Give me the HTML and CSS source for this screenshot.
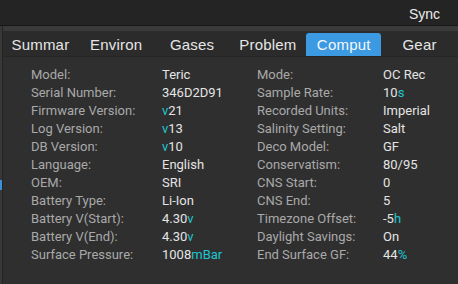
FILE: index.html
```html
<!DOCTYPE html>
<html lang="en">
<head>
  <meta charset="UTF-8" />
  <title>Dive Log - Computer</title>
  <link rel="stylesheet" href="styles.css">
</head>
<body>
  <div class="topbar">
    <span class="sync">Sync</span>
  </div>
  <div class="main">
    <div class="rail"><span class="rail-mark"></span></div>
    <div class="panel">
      <div class="tabs" role="tablist">
        <div class="tab">Summar</div>
        <div class="tab">Environ</div>
        <div class="tab">Gases</div>
        <div class="tab">Problem</div>
        <div class="tab active">Comput</div>
        <div class="tab">Gear</div>
      </div>

      <div class="info">
        <span class="label">Model:</span><span class="value">Teric</span>
        <span class="label">Mode:</span><span class="value">OC Rec</span>

        <span class="label">Serial Number:</span><span class="value">346D2D91</span>
        <span class="label">Sample Rate:</span><span class="value">10<i class="unit">s</i></span>

        <span class="label">Firmware Version:</span><span class="value"><i class="unit">v</i>21</span>
        <span class="label">Recorded Units:</span><span class="value">Imperial</span>

        <span class="label">Log Version:</span><span class="value"><i class="unit">v</i>13</span>
        <span class="label">Salinity Setting:</span><span class="value">Salt</span>

        <span class="label">DB Version:</span><span class="value"><i class="unit">v</i>10</span>
        <span class="label">Deco Model:</span><span class="value">GF</span>

        <span class="label">Language:</span><span class="value">English</span>
        <span class="label">Conservatism:</span><span class="value">80/95</span>

        <span class="label">OEM:</span><span class="value">SRI</span>
        <span class="label">CNS Start:</span><span class="value">0</span>

        <span class="label">Battery Type:</span><span class="value">Li-Ion</span>
        <span class="label">CNS End:</span><span class="value">5</span>

        <span class="label">Battery V(Start):</span><span class="value">4.30<i class="unit">v</i></span>
        <span class="label">Timezone Offset:</span><span class="value">-5<i class="unit">h</i></span>

        <span class="label">Battery V(End):</span><span class="value">4.30<i class="unit">v</i></span>
        <span class="label">Daylight Savings:</span><span class="value">On</span>

        <span class="label">Surface Pressure:</span><span class="value">1008<i class="unit">mBar</i></span>
        <span class="label">End Surface GF:</span><span class="value">44<i class="unit">%</i></span>
      </div>
    </div>
  </div>
</body>
</html>
```

FILE: styles.css
```css
*, *::before, *::after {
  box-sizing: border-box;
}
body {
  margin: 0;
  width: 458px;
  height: 284px;
  overflow: hidden;
  background: #2f2f2f;
  font-family: Roboto, 'Liberation Sans', sans-serif;
  display: flex;
  flex-direction: column;
}

.topbar {
  height: 26px;
  flex-shrink: 0;
  background: #242424;
  border-bottom: 1px solid #171717;
  display: flex;
  justify-content: flex-end;
  align-items: center;
  padding-right: 18px;
}
.sync {
  font-family: 'Liberation Sans', Arial, sans-serif;
  font-size: 14px;
  color: #ececec;
  padding-top: 2px;
}

.main {
  flex: 1;
  display: flex;
}

.rail {
  width: 3px;
  flex-shrink: 0;
  background: #383838;
  border-right: 1px solid #242424;
}
.rail-mark {
  display: block;
  margin-top: 154px;
  height: 10px;
  background: #3d8fd8;
}

.panel {
  flex: 1;
  display: flex;
  flex-direction: column;
}

.tabs {
  display: flex;
  box-sizing: content-box;
  height: 23px;
  padding-top: 2px;
  background: #2b2b2b;
  border-top: 5px solid #3a3a3a;
  border-bottom: 1px solid #262626;
}
.tab {
  flex: 1;
  display: flex;
  justify-content: center;
  align-items: center;
  font-family: 'Liberation Sans', Arial, sans-serif;
  font-size: 15px;
  letter-spacing: 0.2px;
  color: #e6e6e6;
  border-radius: 3px 3px 0 0;
  margin-right: 1px;
}
.tab.active {
  background: #3c9ae2;
  color: #f4f8fc;
}

.info {
  display: grid;
  grid-template-columns: 131px 95px 126px auto;
  grid-auto-rows: 18px;
  align-items: center;
  padding: 8px 0 0 28px;
  font-size: 13px;
}
.label {
  color: #a9a9a9;
}
.value {
  color: #e4e4e4;
}
.unit {
  font-style: normal;
  color: #1fc6cf;
}
```
